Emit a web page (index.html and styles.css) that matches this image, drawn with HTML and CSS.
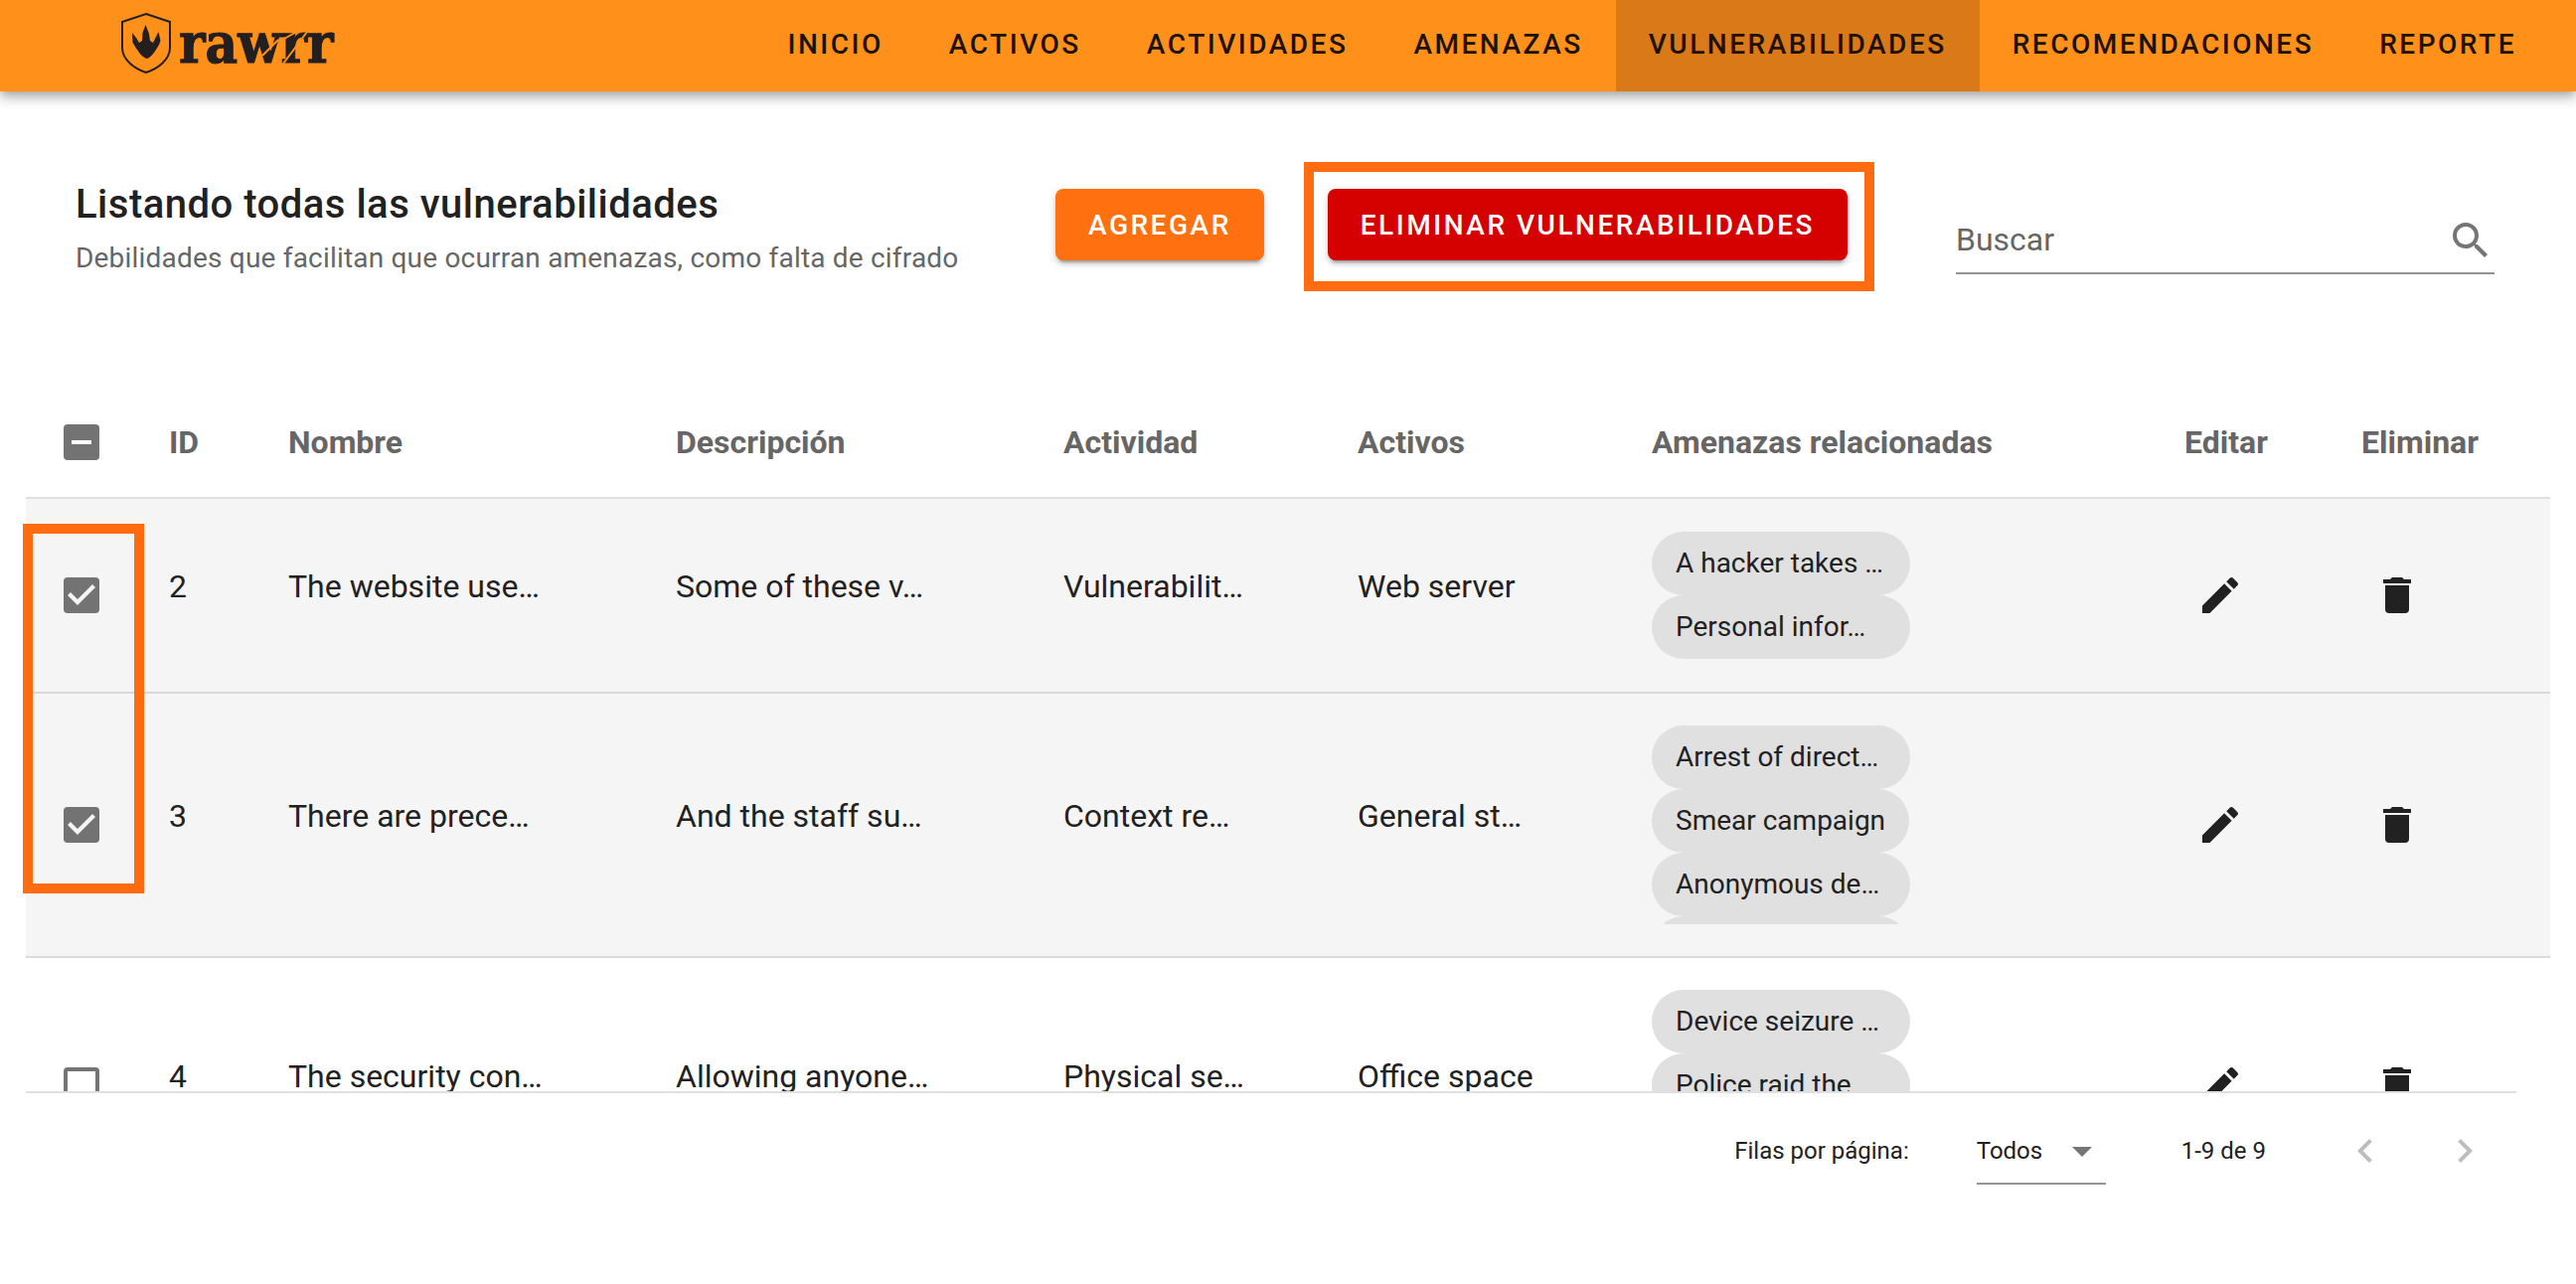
FILE: index.html
```html
<!DOCTYPE html>
<html lang="es">
<head>
<meta charset="utf-8">
<meta name="viewport" content="width=device-width, initial-scale=1">
<title>rawrr – Vulnerabilidades</title>
<link rel="stylesheet" href="styles.css">
</head>
<body>
<svg class="sprite" aria-hidden="true">
  <symbol id="i-pencil" viewBox="0 0 24 24"><path d="M20.71,7.04C21.1,6.65 21.1,6 20.71,5.63L18.37,3.29C18,2.9 17.35,2.9 16.96,3.29L15.12,5.12L18.87,8.87M3,17.25V21H6.75L17.81,9.93L14.06,6.18L3,17.25Z"/></symbol>
  <symbol id="i-delete" viewBox="0 0 24 24"><path d="M19,4H15.5L14.5,3H9.5L8.5,4H5V6H19M6,19A2,2 0 0,0 8,21H16A2,2 0 0,0 18,19V7H6V19Z"/></symbol>
  <symbol id="i-search" viewBox="0 0 24 24"><path d="M9.5,3A6.5,6.5 0 0,1 16,9.5C16,11.11 15.41,12.59 14.44,13.73L14.71,14H15.5L20.5,19L19,20.5L14,15.5V14.71L13.73,14.44C12.59,15.41 11.11,16 9.5,16A6.5,6.5 0 0,1 3,9.5A6.5,6.5 0 0,1 9.5,3M9.5,5C7,5 5,7 5,9.5C5,12 7,14 9.5,14C12,14 14,12 14,9.5C14,7 12,5 9.5,5Z"/></symbol>
  <symbol id="i-down" viewBox="0 0 24 24"><path d="M7,10L12,15L17,10H7Z"/></symbol>
  <symbol id="i-prev" viewBox="0 0 24 24"><path d="M15.41,16.58L10.83,12L15.41,7.41L14,6L8,12L14,18L15.41,16.58Z"/></symbol>
  <symbol id="i-next" viewBox="0 0 24 24"><path d="M8.59,16.58L13.17,12L8.59,7.41L10,6L16,12L10,18L8.59,16.58Z"/></symbol>
</svg>

<header class="appbar">
  <a class="brand" href="#" aria-label="rawrr">
    <svg class="logo" viewBox="0 0 220 64" role="img" aria-label="rawrr">
      <path class="shield" d="M27,2 L51,10 V36 C51,48 39,57 27,61 C15,57 3,48 3,36 V10 Z"/>
      <path class="claw" d="M26.500,13 L30,22 L31,29 L34,31 L37,25 L39.500,20 L41.500,29 L40,33 C36,40 32,46 27.500,47 C22,45 18,38 13.500,31 L13,21 L17,26 L20,31 L23,29 L23.500,21 Z"/>
      <text class="wordmark" x="60" y="51">rawrr</text>
      <path class="scratch" d="M160,28 L144,44 M189,20 L165,52 M182,18 L166,27"/>
    </svg>
  </a>
  <nav class="nav">
    <a href="#">INICIO</a>
    <a href="#">ACTIVOS</a>
    <a href="#">ACTIVIDADES</a>
    <a href="#">AMENAZAS</a>
    <a href="#" class="active" aria-current="page">VULNERABILIDADES</a>
    <a href="#">RECOMENDACIONES</a>
    <a href="#">REPORTE</a>
  </nav>
</header>

<main>
  <section class="toolbar">
    <div class="heading">
      <h1>Listando todas las vulnerabilidades</h1>
      <p>Debilidades que facilitan que ocurran amenazas, como falta de cifrado</p>
    </div>
    <div class="actions">
      <button class="btn btn-add" type="button">AGREGAR</button>
      <div class="marked">
        <button class="btn btn-delete" type="button">ELIMINAR VULNERABILIDADES</button>
      </div>
    </div>
    <div class="search">
      <input type="text" placeholder="Buscar" aria-label="Buscar">
      <svg class="icon muted" aria-hidden="true"><use href="#i-search"/></svg>
    </div>
  </section>

  <section class="listing">
    <div class="scroller">
      <table>
        <colgroup>
          <col class="c-check"><col class="c-id"><col class="c-text"><col class="c-text"><col class="c-ref"><col class="c-ref"><col class="c-threats"><col class="c-edit"><col class="c-delete">
        </colgroup>
        <thead>
          <tr>
            <th><input type="checkbox" id="select-all" aria-label="Seleccionar todo"></th>
            <th>ID</th><th>Nombre</th><th>Descripción</th><th>Actividad</th><th>Activos</th><th>Amenazas relacionadas</th><th>Editar</th><th>Eliminar</th>
          </tr>
        </thead>
        <tbody>
          <tr class="selected">
            <td class="tool"><input type="checkbox" checked aria-label="Seleccionar 2"></td>
            <td>2</td><td>The website use…</td><td>Some of these v…</td><td>Vulnerabilit…</td><td>Web server</td>
            <td class="tool"><div class="chips"><span class="chip cut">A hacker takes …</span><span class="chip cut">Personal infor…</span></div></td>
            <td class="tool"><button class="icon-btn" type="button" aria-label="Editar 2"><svg class="icon"><use href="#i-pencil"/></svg></button></td>
            <td class="tool"><button class="icon-btn" type="button" aria-label="Eliminar 2"><svg class="icon"><use href="#i-delete"/></svg></button></td>
          </tr>
          <tr class="selected">
            <td class="tool"><input type="checkbox" checked aria-label="Seleccionar 3"></td>
            <td>3</td><td>There are prece…</td><td>And the staff su…</td><td>Context re…</td><td>General st…</td>
            <td class="tool"><div class="chips"><span class="chip cut">Arrest of direct…</span><span class="chip">Smear campaign</span><span class="chip cut">Anonymous de…</span><span class="chip cut"></span></div></td>
            <td class="tool"><button class="icon-btn" type="button" aria-label="Editar 3"><svg class="icon"><use href="#i-pencil"/></svg></button></td>
            <td class="tool"><button class="icon-btn" type="button" aria-label="Eliminar 3"><svg class="icon"><use href="#i-delete"/></svg></button></td>
          </tr>
          <tr>
            <td class="tool"><input type="checkbox" aria-label="Seleccionar 4"></td>
            <td>4</td><td>The security con…</td><td>Allowing anyone…</td><td>Physical se…</td><td>Office space</td>
            <td class="tool"><div class="chips"><span class="chip cut">Device seizure …</span><span class="chip cut">Police raid the …</span><span class="chip cut"></span></div></td>
            <td class="tool"><button class="icon-btn" type="button" aria-label="Editar 4"><svg class="icon"><use href="#i-pencil"/></svg></button></td>
            <td class="tool"><button class="icon-btn" type="button" aria-label="Eliminar 4"><svg class="icon"><use href="#i-delete"/></svg></button></td>
          </tr>
        </tbody>
      </table>
    </div>
    <div class="marker"></div>
    <footer class="pager">
      <label for="rows">Filas por página:</label>
      <div class="select">
        <select id="rows"><option>Todos</option></select>
        <svg class="icon muted" aria-hidden="true"><use href="#i-down"/></svg>
      </div>
      <span class="range">1-9 de 9</span>
      <div class="steps">
        <button class="icon-btn" type="button" disabled aria-label="Página anterior"><svg class="icon"><use href="#i-prev"/></svg></button>
        <button class="icon-btn" type="button" disabled aria-label="Página siguiente"><svg class="icon"><use href="#i-next"/></svg></button>
      </div>
    </footer>
  </section>
</main>
<script src="script.js"></script>
</body>
</html>
```
FILE: styles.css
```css
* { box-sizing: border-box; }

body {
  margin: 0;
  background: #fff;
  color: #212121;
  font-family: Roboto, "Liberation Sans", sans-serif;
  font-size: 32px;
}

button, input, select { font: inherit; color: inherit; }

.sprite { display: none; }
.icon { display: block; width: 48px; height: 48px; fill: currentColor; }
.muted { color: #757575; }

/* Top bar */
.appbar {
  position: relative;
  display: flex;
  justify-content: space-between;
  height: 92px;
  padding: 0 27px 0 120px;
  background: #ff911b;
  box-shadow: 0 4px 8px -2px rgba(0,0,0,.2), 0 8px 10px rgba(0,0,0,.14), 0 2px 20px rgba(0,0,0,.12);
}
.brand { padding-top: 12px; }
.logo { display: block; width: 220px; height: 64px; }
.shield { fill: none; stroke: #231f20; stroke-width: 2; }
.claw { fill: #231f20; }
.wordmark {
  font-family: "DejaVu Serif Condensed", "DejaVu Serif", serif;
  font-weight: 700;
  font-size: 56px;
  fill: #231f20;
  stroke: #231f20;
  stroke-width: 1;
}
.scratch { fill: none; stroke: #ff911b; stroke-width: 2; }
.nav { display: flex; }
.nav a {
  padding: 0 33px 2px;
  color: #1e1108;
  font-size: 28px;
  font-weight: 500;
  letter-spacing: .09em;
  line-height: 90px;
  text-decoration: none;
}
.nav .active { background: #d97918; }

/* Heading, actions and search */
.toolbar {
  display: grid;
  grid-template-columns: 986fr 906fr 542fr;
  align-items: start;
  padding: 86px 82px 108px 76px;
}
h1 { margin: 0 0 4px; font-size: 40px; font-weight: 500; letter-spacing: .0125em; line-height: 56px; }
.heading p { margin: 0; color: #666; font-size: 28px; letter-spacing: .007em; line-height: 44px; }
.actions { display: flex; gap: 64px; padding-top: 12px; }
.btn {
  height: 72px;
  padding: 0 33px;
  border: 0;
  border-radius: 8px;
  color: #fff;
  font-size: 28px;
  font-weight: 500;
  letter-spacing: .09em;
  white-space: nowrap;
  box-shadow: 0 6px 2px -4px rgba(0,0,0,.2), 0 4px 4px rgba(0,0,0,.14), 0 2px 10px rgba(0,0,0,.12);
}
.btn-add { background: #ff7010; }
.btn-delete { background: #d50000; }
.marked { position: relative; }
.marked::after {
  content: "";
  position: absolute;
  inset: -27px -27px -31px -24px;
  border: 10px solid #ff6b10;
  pointer-events: none;
}
.search { display: flex; align-items: center; margin-top: 32px; border-bottom: 2px solid #949494; }
.search input { flex: 1; min-width: 0; height: 64px; padding: 0 0 2px; border: 0; background: none; outline: 0; }
.search input::placeholder { color: #666; opacity: 1; }

/* Table */
.listing { position: relative; margin: 0 26px; }
.scroller { max-height: 708px; overflow: hidden; }
table { width: 100%; border-collapse: separate; border-spacing: 0; table-layout: fixed; }
.c-check { width: 112px; }
.c-id { width: 120px; }
.c-text { width: 390px; }
.c-ref { width: 296px; }
.c-threats { width: 536px; }
.c-edit { width: 178px; }
.c-delete { width: 222px; }
th, td { border-bottom: 2px solid #e0e0e0; text-align: left; white-space: nowrap; }
th { height: 112px; padding: 0 32px; color: #666; font-weight: 700; }
td { height: 196px; padding: 0 32px 18px; }
.tool { padding: 32px; }
.selected td { background: #f5f5f5; border-color: #d9d9d9; }

input[type="checkbox"] {
  appearance: none;
  display: block;
  position: relative;
  width: 36px;
  height: 36px;
  margin: 0 0 0 6px;
  border: 4px solid #757575;
  border-radius: 4px;
}
input[type="checkbox"]:checked, input[type="checkbox"]:indeterminate { border: 0; background: #737373; }
input[type="checkbox"]:checked::after {
  content: "";
  position: absolute;
  inset: 0;
  background: #f5f5f5;
  clip-path: polygon(14px 28px, 4px 18px, 7px 15px, 14px 22px, 29px 7px, 32px 10px);
}
input[type="checkbox"]:indeterminate::after {
  content: "";
  position: absolute;
  inset: 16px 8px;
  background: #fff;
}

.chips { display: flex; flex-direction: column; align-items: flex-start; max-height: 200px; overflow: hidden; }
.chip { flex: none; height: 64px; padding: 0 24px; border-radius: 32px; background: #e0e0e0; font-size: 28px; line-height: 64px; }
.cut { width: 260px; }

.icon-btn { display: block; width: 72px; height: 72px; padding: 12px; border: 0; background: none; }
.icon-btn:disabled { color: #bdbdbd; }

.marker { position: absolute; top: 137px; left: -3px; width: 122px; height: 372px; border: 10px solid #ff6b10; pointer-events: none; }

/* Pagination */
.pager {
  display: flex;
  align-items: center;
  justify-content: flex-end;
  height: 118px;
  margin-right: 34px;
  padding-right: 16px;
  border-top: 2px solid #e0e0e0;
  font-size: 24px;
}
.select { position: relative; width: 130px; margin: 2px 76px 0 68px; border-bottom: 2px solid #949494; }
.select select { display: block; appearance: none; width: 100%; height: 64px; padding: 0; border: 0; background: none; }
.select .icon { position: absolute; top: 8px; right: 0; pointer-events: none; }
.steps { display: flex; gap: 28px; margin-left: 64px; }
```
FILE: script.js
```js
document.getElementById("select-all").indeterminate = true;
```
